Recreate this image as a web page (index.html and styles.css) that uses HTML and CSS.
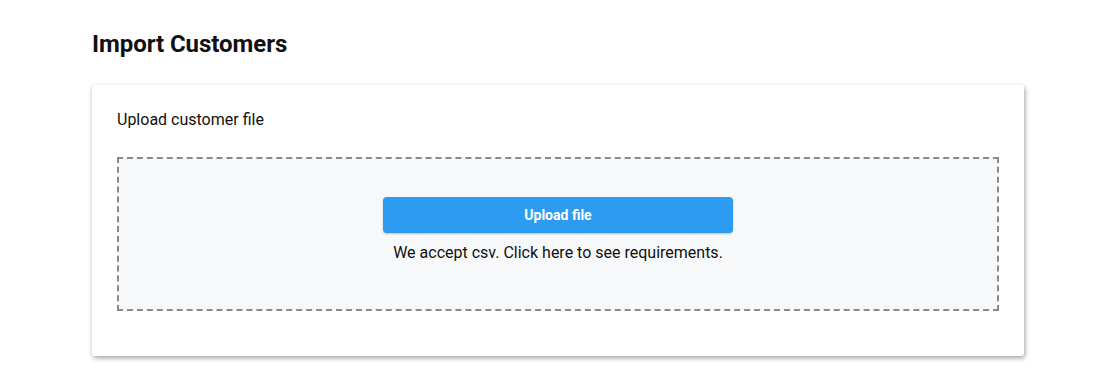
FILE: index.html
```html
<!DOCTYPE html>
<html>
<head>
<meta charset="utf-8">
<link rel="stylesheet" href="styles.css">
</head>
<body>
<main class="page">
  <h1 class="title">Import Customers</h1>
  <section class="card">
    <div class="card-label">Upload customer file</div>
    <div class="dropzone">
      <button class="upload-btn" type="button">Upload file</button>
      <p class="hint">We accept csv. Click here to see requirements.</p>
    </div>
  </section>
</main>
</body>
</html>
```

FILE: styles.css
```css
html, body {
  margin: 0;
  padding: 0;
  background: #ffffff;
}
body {
  font-family: Roboto, "Liberation Sans", Arial, sans-serif;
  color: #000;
}
.page {
  width: 932px;
  padding: 28px 0 40px 92px;
}
.title {
  margin: 0;
  font-size: 24px;
  font-weight: 700;
  line-height: 32px;
  letter-spacing: -0.05px;
  color: #111;
}
.card {
  margin-top: 25px;
  background: #fff;
  border-radius: 3px;
  box-shadow: 1px 2px 5px rgba(0,0,0,0.38);
  padding: 25px 25px 45px;
}
.card-label {
  font-size: 16px;
  line-height: 20px;
  color: #111;
}
.dropzone {
  margin-top: 27px;
  box-sizing: border-box;
  height: 154px;
  border: 2px dashed #8a8a8c;
  background: #f7f8fa;
  display: flex;
  flex-direction: column;
  align-items: center;
  padding-top: 38px;
}
.upload-btn {
  width: 350px;
  height: 36px;
  border: none;
  border-radius: 4px;
  background: #2d9bf0;
  color: #fff;
  font-family: Roboto, "Liberation Sans", Arial, sans-serif;
  font-size: 14px;
  font-weight: 700;
  box-shadow: 0 1px 2px rgba(0,0,0,0.25);
  cursor: pointer;
}
.hint {
  margin: 9px 0 0;
  font-size: 16px;
  line-height: 22px;
  color: #111;
}
```
